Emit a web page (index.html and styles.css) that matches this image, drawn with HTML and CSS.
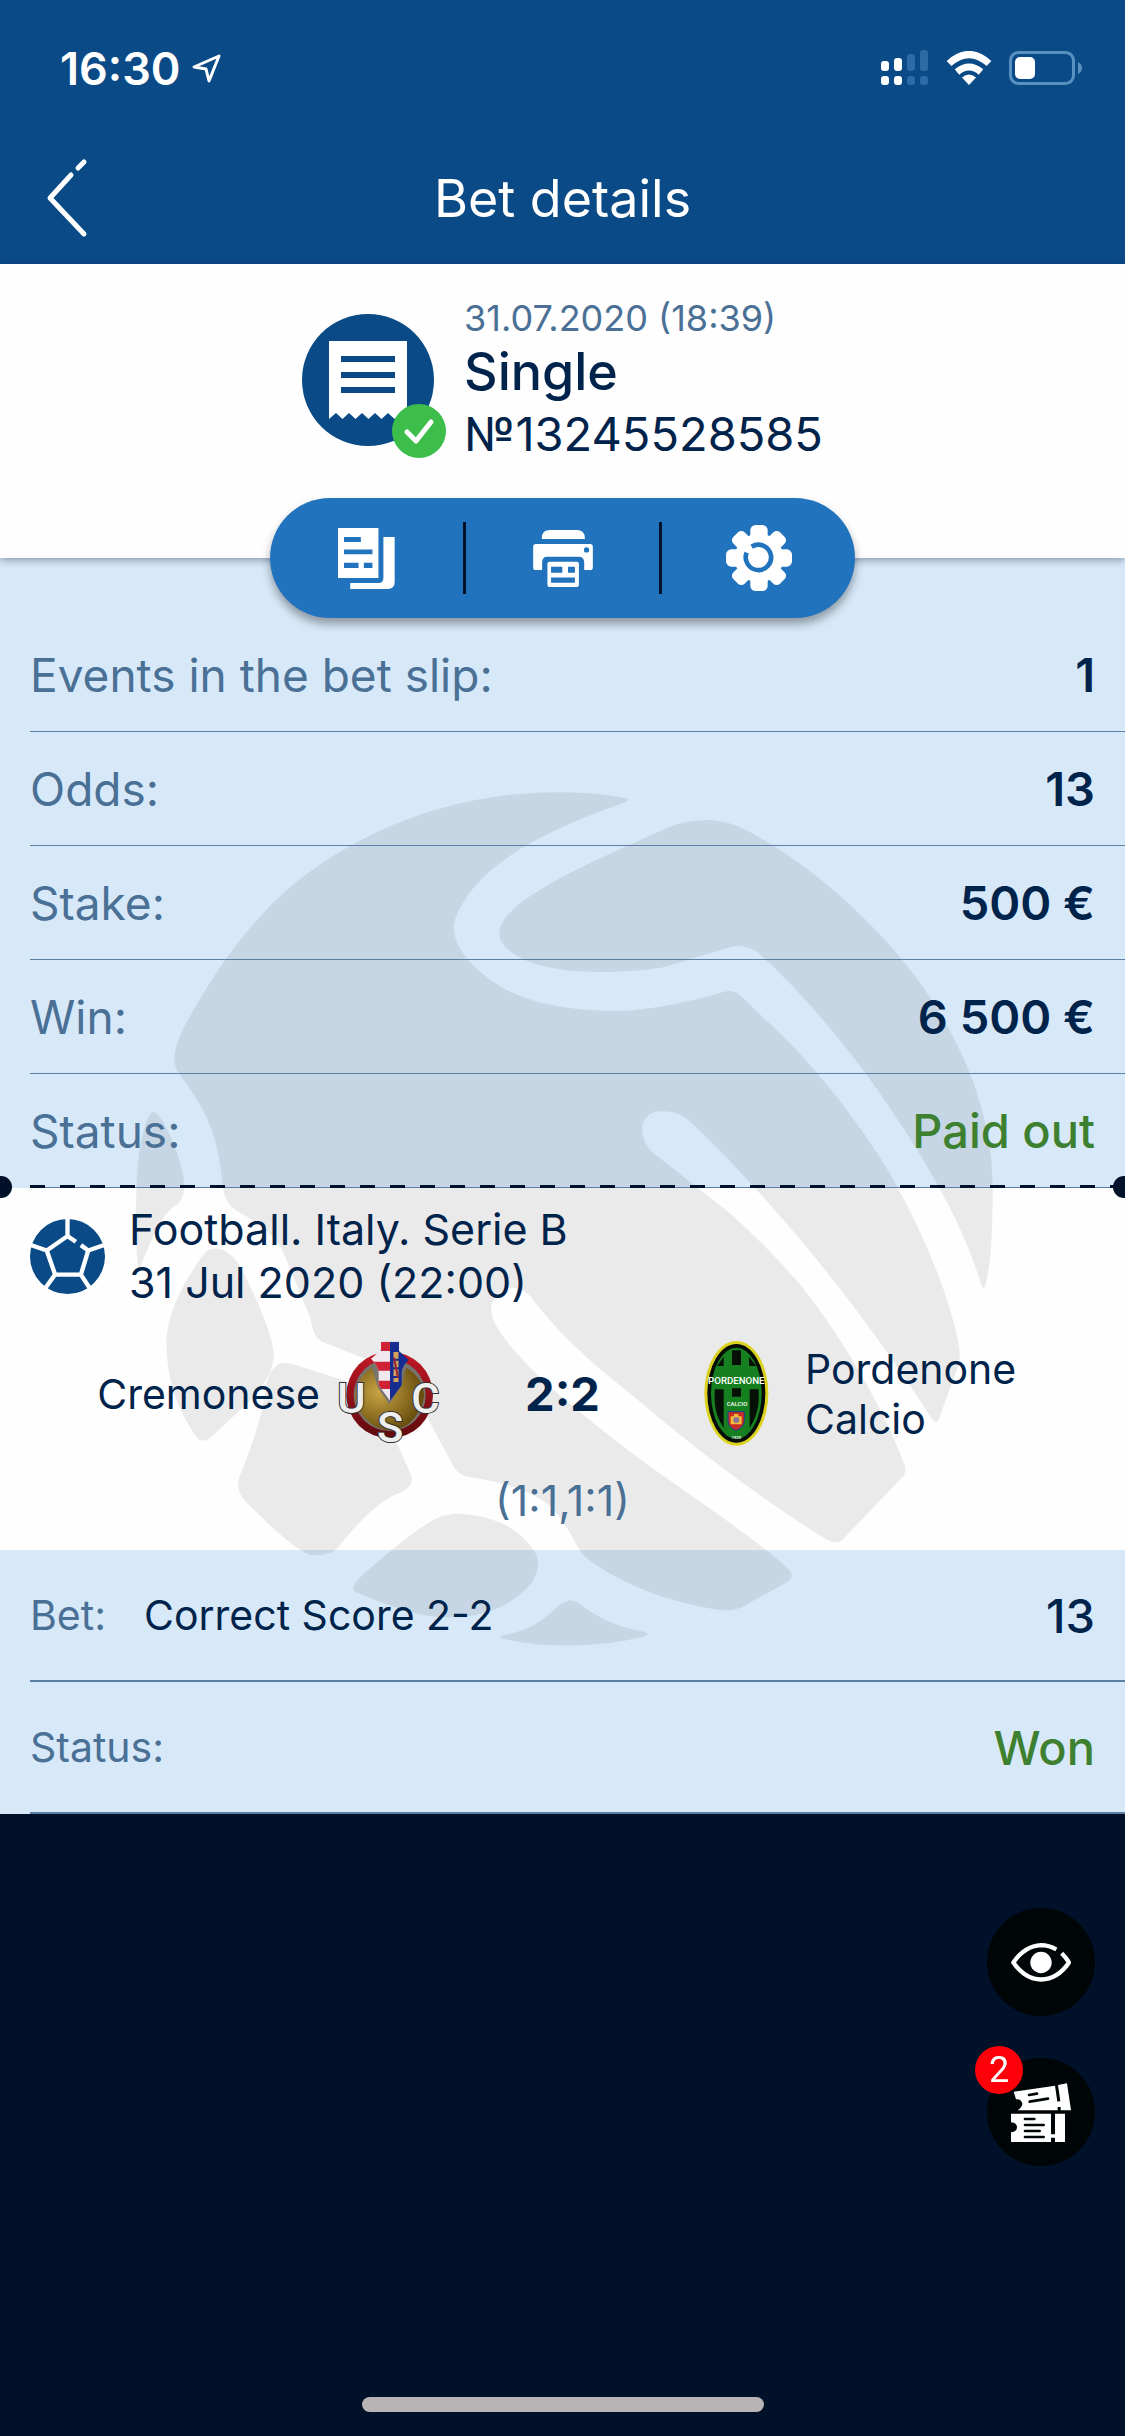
FILE: index.html
```
<!DOCTYPE html>
<html lang="en">
<head>
    <meta charset="UTF-8">
    <meta name="viewport" content="width=device-width, initial-scale=1.0">
    <title>Bet details</title>
    <link rel="stylesheet" href="styles.css">
</head>
<body>
    <header class="topbar">
        <div class="status-bar">
            <div class="clock">
                <span>16:30</span>
                <svg width="30" height="30" viewBox="0 0 30 30" fill="none" stroke="#fff" stroke-width="3" stroke-linejoin="round"><path d="M27 3L2 14l12 2 3 12z"/></svg>
            </div>
            <div class="indicators">
                <svg width="48" height="36" viewBox="0 0 48 36" fill="#fff">
                    <rect y="11" width="8" height="10" rx="3"/><rect x="13" y="8" width="8" height="13" rx="3"/>
                    <rect y="26" width="8" height="9" rx="3"/><rect x="13" y="26" width="8" height="9" rx="3"/>
                    <g fill="#2c6ba5"><rect x="26" y="4" width="8" height="17" rx="3"/><rect x="39" width="8" height="21" rx="3"/><rect x="26" y="26" width="8" height="9" rx="3"/><rect x="39" y="26" width="8" height="9" rx="3"/></g>
                </svg>
                <svg width="46" height="34" viewBox="0 0 46 34">
                    <g fill="none" stroke="#fff" stroke-width="7"><path d="M3 12.500Q23-5.500 43 12.500"/><path d="M11 21Q23 11 35 21"/></g>
                    <path fill="#fff" d="M16 26.500q7-6 14 0L23 34z"/>
                </svg>
                <svg width="74" height="34" viewBox="0 0 74 34">
                    <rect x="1.500" y="1.500" width="63" height="31" rx="8" fill="none" stroke="#5890c0" stroke-width="3"/>
                    <rect x="6" y="6" width="20" height="22" rx="5" fill="#fff"/>
                    <path fill="#5890c0" d="M69 11q4 2 4 6t-4 6z"/>
                </svg>
            </div>
        </div>
        <div class="nav">
            <button class="back" aria-label="Back">
                <svg width="42" height="80" viewBox="0 0 42 80" fill="none" stroke="#fff" stroke-width="5" stroke-linecap="round"><path d="M38 4l-6 6M25 17L4 40l34 36" stroke-linejoin="round"/></svg>
            </button>
            <h1>Bet details</h1>
        </div>
    </header>

    <section class="ticket">
        <div class="ticket-info">
            <div class="ticket-icon">
                <svg width="132" height="132" viewBox="0 0 132 132">
                    <circle cx="66" cy="66" r="66" fill="#0a4a87"/>
                    <path fill="#fff" d="M27 27h78v78l-6-6-6.500 6-6.500-6-6.500 6-6.500-6-6.500 6-6.500-6-6.500 6-6.500-6-6.500 6-6.500-6-7 6z"/>
                    <path stroke="#0a4a87" stroke-width="6" d="M39 45h54M39 61h54M39 76h54"/>
                </svg>
                <svg class="won-mark" width="54" height="54" viewBox="0 0 54 54">
                    <circle cx="27" cy="27" r="27" fill="#3dbe4b"/>
                    <path d="M15 28l9 9 15-19" fill="none" stroke="#fff" stroke-width="5" stroke-linecap="round" stroke-linejoin="round"/>
                </svg>
            </div>
            <div>
                <div class="date">31.07.2020 (18:39)</div>
                <h2>Single</h2>
                <div class="number">№13245528585</div>
            </div>
        </div>
        <div class="actions">
            <button aria-label="Copy bet slip">
                <svg width="57" height="61" viewBox="0 0 172 184">
                    <path fill="#fff" fill-rule="evenodd" d="M0 0h122v151H0zM18 27v15h51V27zM18 65v14h86V65zM18 105v16h44v-16zM78 105v16h26v-16z"/>
                    <path fill="#fff" d="M137 27h34v136q0 21-21 21H37v-18h85q15 0 15-16z"/>
                </svg>
            </button>
            <span class="divider"></span>
            <button aria-label="Print">
                <svg width="60" height="57" viewBox="0 0 180 172" fill="#fff">
                    <path d="M26 27v-2Q26 0 51 0h80q25 0 25 25v2z"/>
                    <path d="M8 42h164q8 0 8 8v63q0 8-8 8h-18V98q0-17-17-17H42q-15 0-15 17v23H8q-8 0-8-8V50q0-8 8-8z"/>
                    <rect x="43" y="96" width="95" height="76" rx="6"/>
                    <g fill="#2273bd"><circle cx="161" cy="60" r="8"/><path d="M54 111h34v18H54zM105 111h21v18h-21zM54 143h72v16H54z"/></g>
                </svg>
            </button>
            <span class="divider"></span>
            <button aria-label="Settings">
                <svg width="66" height="66" viewBox="-99 -99 198 198" fill="#fff">
                    <circle r="73"/>
                    <rect x="-26" y="-99" width="52" height="198" rx="16"/>
                    <rect x="-26" y="-99" width="52" height="198" rx="16" transform="rotate(90)"/>
                    <rect x="-24" y="-99" width="48" height="198" rx="14" transform="rotate(45)"/>
                    <rect x="-24" y="-99" width="48" height="198" rx="14" transform="rotate(135)"/>
                    <path d="M-22-34A38 38 0 1 1-37-16" fill="none" stroke="#2273bd" stroke-width="14"/>
                </svg>
            </button>
        </div>
    </section>

    <main class="details">
        <!-- ball watermark -->
        <svg class="watermark" viewBox="-4 0 1568 1568" aria-hidden="true">
            <path d="M896 33Q840 22 780 22C600 20 420 80 280 200Q180 290 97 445Q70 500 84 522C100 550 135 585 153 650Q163 690 167 735Q172 765 190 775Q260 815 275 850L325 970Q330 1005 345 1012L440 1050Q500 1080 525 1130Q555 1185 585 1242Q595 1255 620 1258Q700 1270 745 1300Q775 1320 805 1380Q815 1400 840 1415Q930 1475 1055 1495Q1080 1500 1100 1492L1185 1445Q1198 1435 1188 1424C1120 1360 1000 1285 900 1210C810 1140 720 1070 670 1000Q645 965 652 945Q660 918 688 915Q712 915 728 940Q790 1020 900 1105Q1080 1260 1255 1369Q1275 1380 1285 1368L1392 1256Q1400 1248 1396 1235Q1340 1090 1235 945Q1180 870 1080 780L940 670Q918 645 924 620Q932 597 957 597Q990 595 1010 617C1150 750 1310 940 1445 1152Q1453 1163 1458 1150L1493 1055Q1497 1040 1493 1015Q1465 880 1370 710Q1290 580 1190 475L1098 387Q1087 378 1072 381C980 408 910 417 860 416C720 412 655 375 610 325Q570 280 590 240C630 150 750 90 888 42Q902 36 896 33Z"/>
            <path d="M1045 72Q1070 73 1100 85C1220 145 1350 260 1430 375C1530 520 1560 650 1554 770Q1553 870 1541 912Q1538 920 1534 910C1500 800 1440 690 1330 535Q1230 400 1130 310Q1112 297 1085 300L960 338C880 350 780 350 720 328Q650 300 669 260C700 200 850 140 970 85Q1000 72 1045 72Z"/>
            <path d="M42 598Q55 600 78 655Q97 700 97 735Q97 755 85 765Q60 780 42 820L15 885Q8 830 11 745Q14 640 36 602Z"/>
            <path d="M148 845Q180 840 205 890Q255 990 259 1035Q258 1075 215 1120L145 1185Q130 1197 120 1185Q65 1110 65 1010Q70 940 130 858Q138 847 148 845Z"/>
            <path d="M262 1058Q270 1045 300 1055L400 1087Q440 1105 460 1150L505 1250Q515 1270 490 1283Q440 1300 375 1383Q360 1400 325 1397Q290 1385 205 1297Q190 1280 197 1255Q240 1150 245 1090Q250 1065 262 1058Z"/>
            <path d="M585 1322C660 1325 700 1350 725 1385Q745 1410 725 1445C690 1490 630 1513 560 1509Q500 1505 405 1463Q398 1455 408 1443C460 1395 520 1345 560 1327Z"/>
            <path d="M792 1478Q805 1480 820 1492C860 1520 890 1528 925 1535Q940 1540 925 1544Q860 1560 790 1560Q720 1560 668 1547Q665 1542 680 1540C725 1530 750 1510 775 1485Z"/>
        </svg>

        <dl class="summary">
            <div class="row"><dt>Events in the bet slip:</dt><dd>1</dd></div>
            <div class="row"><dt>Odds:</dt><dd>13</dd></div>
            <div class="row"><dt>Stake:</dt><dd>500 €</dd></div>
            <div class="row"><dt>Win:</dt><dd>6 500 €</dd></div>
            <div class="row"><dt>Status:</dt><dd class="good">Paid out</dd></div>
            <div class="tear"></div>
        </dl>

        <section class="event">
            <div class="event-title">
                <svg width="75" height="75" viewBox="-112 -112 224 224">
                    <circle r="112" fill="#0a4a87"/>
                    <path d="M25-44L0-61-62-18-37 54H40L62-18 40-34M0-61V-112M62-18L112-35M-62-18L-112-35M40 54L68 97M-37 54L-66 94" fill="none" stroke="#fff" stroke-width="13"/>
                </svg>
                <p>Football. Italy. Serie B<br>31 Jul 2020 (22:00)</p>
            </div>
            <div class="teams">
                <div class="team home">
                    <span>Cremonese</span>
                    <svg width="105" height="105" viewBox="0 0 315 315">
                        <defs>
                            <radialGradient id="gold" cx=".35" cy=".4" r=".7"><stop offset="0" stop-color="#c9a544"/><stop offset="1" stop-color="#5f4509"/></radialGradient>
                            <linearGradient id="red" x2="0" y2="1"><stop offset="0" stop-color="#c31826"/><stop offset="1" stop-color="#5e0a0d"/></linearGradient>
                            <clipPath id="shield"><path d="M135 2h54v28l29 27q-18 16-21 36v40l-35 46-34-46V93q-3-20-23-40l30-25z"/></clipPath>
                        </defs>
                        <circle cx="161" cy="162" r="130" fill="url(#red)"/>
                        <circle cx="161" cy="162" r="108" fill="#77736d"/>
                        <path fill="url(#gold)" d="M108 80Q60 110 57 165q5 50 50 85 54 35 110 0 40-35 48-85-5-58-55-85l-12 50-38 60-34-50z"/>
                        <g clip-path="url(#shield)">
                            <path fill="#f0e9ef" d="M100 0h62v180h-62z"/>
                            <path fill="#cf2335" d="M100 0h62v30h-62zM100 62h62v27h-62zM100 119h62v25h-62z"/>
                            <path fill="#172c91" d="M162 0h60v180h-60z"/>
                            <path d="M180 33v90" stroke="#d3a159" stroke-width="15" stroke-dasharray="20 6"/>
                            <path d="M174 50l12 60" stroke="#9b2435" stroke-width="6"/>
                        </g>
                        <g class="crest-letters"><text x="46" y="217">U</text><text x="162" y="302">S</text><text x="268" y="217">C</text></g>
                    </svg>
                </div>
                <strong class="score">2:2</strong>
                <div class="team away">
                    <svg width="105" height="105" viewBox="-61 0 315 315">
                        <ellipse cx="96" cy="157" rx="96" ry="157" fill="#dbd11f"/>
                        <ellipse cx="96" cy="157" rx="87" ry="148" fill="#050b06"/>
                        <ellipse cx="96" cy="157" rx="76" ry="137" fill="#168020"/>
                        <path fill="#061006" d="M83 28h27v44H83zM38 75l20-28v28zM134 47v28h22zM83 142h27v25H83zM31 145h27v116q-26-40-27-80zM136 145h27v36q-2 40-27 80z"/>
                        <g class="crest-name"><text x="96" y="129" font-size="29">PORDENONE</text><text x="98" y="195" font-size="18">CALCIO</text><text x="96" y="293" font-size="13">1920</text></g>
                        <path d="M71 212h49v30q-5 20-25 26-20-6-24-26z" fill="#c92a25" stroke="#174292" stroke-width="3"/>
                        <path d="M79 226h10v-7h13v7h10v24H79z" fill="#f0bd38"/><circle cx="96" cy="237" r="9" fill="#8c719b"/>
                    </svg>
                    <span>Pordenone Calcio</span>
                </div>
            </div>
            <div class="periods">(1:1,1:1)</div>
        </section>

        <dl class="bet">
            <div class="row"><dt>Bet:</dt><dd class="pick">Correct Score 2-2</dd><dd class="value">13</dd></div>
            <div class="row"><dt>Status:</dt><dd class="value good">Won</dd></div>
        </dl>
    </main>

    <div class="floating">
        <button aria-label="Watch">
            <svg width="60" height="39" viewBox="0 0 180 116" fill="none" stroke="#fff" stroke-width="13" stroke-linejoin="round">
                <path d="M136 19Q114 6 90 6 42 8 7 58q35 50 83 51 50-1 84-51-8-14-22-28"/>
                <circle cx="90" cy="58" r="32" fill="#fff" stroke="none"/>
            </svg>
        </button>
        <button aria-label="Bet slip, 2 bets">
            <svg width="60" height="59" viewBox="0 0 180 177">
                <path fill="#fff" d="M0 92h120v62h12V92h30v85h-30v-13h-12v13H0v-29q18-2 18-15T0 118zM8 26L132 8l7 48 9-2-7-48 27-5 12 81h-31v-10h-9v10H20q14-10 14-20-4-15-19-13z"/>
                <path stroke="#000508" stroke-width="8" stroke-linecap="round" d="M42 108h28M42 126h56M42 144h44M42 162h56M54 36l24-4M56 56l55-9"/>
            </svg>
            <span class="badge">2</span>
        </button>
    </div>
    <div class="home-indicator"></div>
</body>
</html>
```

FILE: styles.css
```
/* Global Styles */
* {
    box-sizing: border-box;
}
body {
    margin: 0;
    min-height: 100vh;
    background-color: #001129;
    color: #00234b;
    font-family: Inter, "Noto Sans", sans-serif;
    font-size: 41px;
}
h1, h2, p, dl, dd {
    margin: 0;
}
svg {
    display: block;
    flex: none;
}
button {
    padding: 0;
    border: none;
    background: none;
    cursor: pointer;
}

/* Top bar */
.topbar {
    padding-bottom: 4px;
    background-color: #0a4a87;
    color: #fff;
}
.status-bar {
    display: flex;
    justify-content: space-between;
    align-items: center;
    height: 136px;
    padding: 0 42px 0 60px;
}
.clock, .indicators {
    display: flex;
    align-items: center;
}
.clock {
    gap: 12px;
    font-size: 45px;
    font-weight: 600;
}
.indicators {
    gap: 17px;
}
.nav {
    display: grid;
    grid-template-columns: 1fr auto 1fr;
    align-items: center;
    height: 124px;
    padding: 0 46px;
}
.nav h1 {
    font-size: 52px;
    font-weight: 400;
}
.back {
    justify-self: start;
}

/* Ticket header */
.ticket {
    position: relative;
    z-index: 2;
    display: flow-root;
    padding-top: 30px;
    background-color: #fefefe;
    box-shadow: 0 2px 8px rgba(0, 20, 50, 0.4);
}
.ticket-info {
    display: flex;
    justify-content: center;
    align-items: center;
    gap: 30px;
}
.ticket-icon {
    position: relative;
}
.won-mark {
    position: absolute;
    right: -12px;
    bottom: -12px;
}
.date {
    color: #4a7095;
    font-size: 36px;
    line-height: 48px;
}
.ticket h2 {
    font-size: 52px;
    font-weight: 500;
    line-height: 60px;
}
.number {
    font-size: 47px;
    line-height: 64px;
}
.actions {
    display: flex;
    align-items: center;
    width: 585px;
    max-width: 90%;
    height: 120px;
    margin: 32px auto -60px;
    border-radius: 60px;
    background-color: #2273bd;
    box-shadow: 0 6px 10px rgba(0, 0, 0, 0.35);
}
.actions button {
    display: flex;
    flex: 1;
    justify-content: center;
    align-items: center;
    height: 100%;
}
.divider {
    width: 3px;
    height: 72px;
    background-color: #001129;
}

/* Bet details */
.details {
    position: relative;
}
.watermark {
    position: absolute;
    top: 222px;
    left: 50%;
    width: 870px;
    transform: translateX(-50%);
    fill: rgba(0, 0, 0, 0.08);
}
.summary, .bet {
    background-color: #d7e9f9;
}
.summary {
    padding-top: 60px;
}
.row {
    position: relative;
    z-index: 1;
    display: flex;
    align-items: center;
    margin-left: 30px;
    padding-right: 30px;
    border-bottom: 1px solid #5b7fa5;
}
.row dt {
    color: #4a7095;
}
.summary .row {
    justify-content: space-between;
    height: 114px;
    font-size: 46px;
}
.summary dd {
    font-size: 47px;
    font-weight: 600;
}
.row .good {
    color: #3d8030;
    font-weight: 500;
}
.tear {
    position: relative;
    z-index: 1;
    height: 3px;
    margin: -3px 0 0 30px;
    background: repeating-linear-gradient(90deg, #001129 0 15px, transparent 15px 30px);
}
.tear::before, .tear::after {
    content: "";
    position: absolute;
    top: -9px;
    width: 22px;
    height: 22px;
    border-radius: 50%;
    background-color: #001129;
}
.tear::before {
    left: -40px;
}
.tear::after {
    right: 0;
    width: 12px;
    border-radius: 11px 0 0 11px;
}

/* Event */
.event {
    padding: 15px 0 25px;
    background-color: #fefefe;
}
.event-title, .teams, .periods {
    position: relative;
    z-index: 1;
}
.event-title {
    display: flex;
    align-items: center;
    gap: 24px;
    padding: 0 30px;
    font-size: 43px;
    line-height: 53px;
}
.teams {
    display: grid;
    grid-template-columns: 1fr 243px 1fr;
    align-items: center;
    margin-top: 32px;
    line-height: 50px;
}
.team {
    display: flex;
    align-items: center;
    gap: 16px;
}
.home {
    justify-content: flex-end;
    padding-left: 30px;
}
.away {
    padding-right: 30px;
}
.score {
    font-size: 47px;
    font-weight: 700;
    text-align: center;
}
.periods {
    margin-top: 29px;
    color: #4a7095;
    font-size: 43px;
    line-height: 50px;
    text-align: center;
}
.crest-letters {
    fill: #eee;
    stroke: #333;
    stroke-width: 6px;
    paint-order: stroke;
    font: 500 130px Roboto, sans-serif;
    text-anchor: middle;
}
.crest-name {
    fill: #fff;
    font-family: Roboto, sans-serif;
    font-weight: 500;
    text-anchor: middle;
}

/* Bet result */
.bet .row {
    height: 132px;
    border-bottom-width: 2px;
}
.bet .pick {
    margin-left: 38px;
}
.bet .value {
    margin-left: auto;
    font-size: 47px;
    font-weight: 500;
}

/* Floating buttons */
.floating {
    position: fixed;
    right: 30px;
    bottom: 270px;
    z-index: 3;
    display: flex;
    flex-direction: column;
    gap: 42px;
}
.floating button {
    position: relative;
    display: flex;
    justify-content: center;
    align-items: center;
    width: 108px;
    height: 108px;
    border-radius: 50%;
    background-color: #000508;
}
.badge {
    position: absolute;
    top: -12px;
    left: -12px;
    width: 48px;
    height: 48px;
    border-radius: 50%;
    background-color: #fe0009;
    color: #fff;
    font: 36px/48px Roboto, sans-serif;
    text-align: center;
}
.home-indicator {
    position: fixed;
    bottom: 24px;
    left: 50%;
    width: 402px;
    height: 15px;
    border-radius: 8px;
    background-color: #b8b4b6;
    transform: translateX(-50%);
}
```
